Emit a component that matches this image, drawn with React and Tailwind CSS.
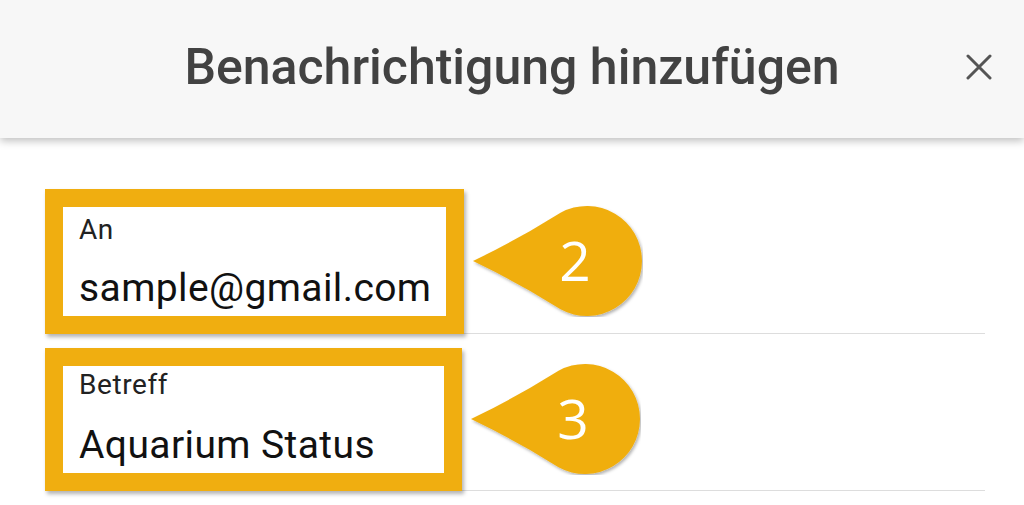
import React from "react";

const Badge = ({ n }) => (
  <svg width="170" height="112" viewBox="0 0 170 112" className="ml-[9px] shrink-0">
    <defs>
      <filter id={`sh${n}`} x="-10%" y="-10%" width="130%" height="130%">
        <feDropShadow dx="1.5" dy="2" stdDeviation="1.5" floodColor="#000" floodOpacity="0.3" />
      </filter>
    </defs>
    <path
      d="M0 56 Q 46 34 87.5 7.8 A55 55 0 1 1 87.5 104.2 Q 46 78 0 56 Z"
      fill="#f0ae10"
      filter={`url(#sh${n})`}
    />
    <text
      x="102"
      y="76"
      textAnchor="middle"
      fill="#fff"
      fontSize="55"
      style={{ fontFamily: "'Open Sans', sans-serif" }}
    >
      {n}
    </text>
  </svg>
);

const Field = ({ label, value, box, labelTop, valueTop, badge }) => (
  <div className="flex items-center border-b border-[#dddddd]">
    <div
      className={`${box} -mb-px border-[18px] border-[#f0ae10] bg-white shadow-[2px_3px_4px_rgba(0,0,0,0.3)] pl-[16px] flex flex-col`}
    >
      <span className={`${labelTop} text-[28px] leading-none tracking-[0.6px] text-[#222]`}>{label}</span>
      <span className={`${valueTop} text-[39px] leading-none tracking-[0.4px] text-[#111] whitespace-nowrap`}>
        {value}
      </span>
    </div>
    <Badge n={badge} />
  </div>
);

export default function App() {
  return (
    <div
      className="w-[1024px] h-[505px] bg-white overflow-hidden"
      style={{ fontFamily: "Roboto, 'Noto Sans', sans-serif" }}
    >
      <div className="h-[138px] bg-[#f7f7f7] shadow-[0_3px_8px_rgba(0,0,0,0.25)] grid grid-cols-[1fr_auto_1fr] items-center relative z-10">
        <div />
        <h1 className="text-[50px] font-medium text-[#424242] leading-none pb-[4px]">
          Benachrichtigung hinzufügen
        </h1>
        <div className="flex justify-end pr-[32px]">
          <svg width="26" height="26" viewBox="0 0 26 26" className="mb-[4px]">
            <path d="M2 2 L24 24 M24 2 L2 24" stroke="#555" strokeWidth="3" strokeLinecap="round" />
          </svg>
        </div>
      </div>
      <div className="pt-[51px] pl-[45px] w-[985px] flex flex-col gap-[14px]">
        <Field
          label="An"
          value="sample@gmail.com"
          box="w-[419px] h-[145px]"
          labelTop="mt-[9px]"
          valueTop="mt-[25px]"
          badge="2"
        />
        <Field
          label="Betreff"
          value="Aquarium Status"
          box="w-[417px] h-[143px]"
          labelTop="mt-[5px]"
          valueTop="mt-[27px]"
          badge="3"
        />
      </div>
    </div>
  );
}
